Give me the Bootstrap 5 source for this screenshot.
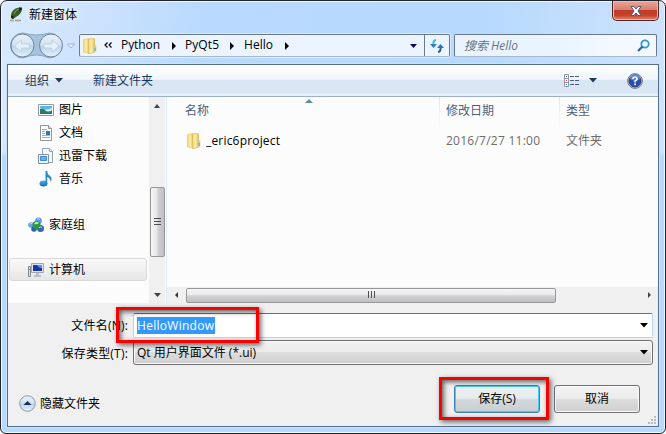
<!DOCTYPE html>
<html lang="zh-CN">
<head>
<meta charset="utf-8">
<title>新建窗体</title>
<link href="https://cdn.jsdelivr.net/npm/bootstrap@5.3.0/dist/css/bootstrap.min.css" rel="stylesheet">
<style>
html,body{height:100%;margin:0;overflow:hidden}
body{font-family:"Open Sans","Noto Sans CJK SC",sans-serif;font-size:12px;line-height:16px;color:#000;background:#f4f6f8}
svg{display:block;flex:none}
.window{width:666px;height:434px;border:1px solid #20242c;border-radius:7px 7px 6px 6px;box-shadow:inset 0 0 0 1px #f0f8ff;padding:0 6px 0 6px;
 background:linear-gradient(180deg,transparent 150px,#b6d9fd 156px),linear-gradient(100deg,#d9eafd 0,#cde3fd 12%,#b9dafd 28%,#b6d9fd 65%,#cbe2fc 88%,#d5e7fc 100%)}
.titlebar{height:33px;padding-left:3px}
.titletext{text-shadow:0 0 5px #fff,0 0 8px #fff;margin:6px 0 0 5px}
.closebtn{width:47px;height:20px;border:1px solid #58232b;border-top:0;border-radius:0 0 5px 5px;box-shadow:inset 0 0 0 1px #f0b8ae;background:linear-gradient(#e6a79b 0,#d8806f 45%,#c03e29 50%,#c5402a 75%,#e48a6c 100%)}
.addressrow{height:23px;padding:0 2px 0 3px}
.crumbs{width:371px;height:23px;margin-left:3px;border:1px solid #68798c;border-bottom-color:#a5b9cf;border-radius:2px;background:#ecf5ff;box-shadow:0 0 0 1px #d9ebfe}
.refresh{width:25px;height:21px;border-left:1px solid #68798c}
.search{width:203px;height:23px;border:1px solid #68798c;border-bottom-color:#a5b9cf;border-radius:2px;background:linear-gradient(100deg,#e9f4ff 50%,#f4f9ff 80%);color:#68737f;font-style:italic;padding:0 6px 0 9px}
.client{height:363px;margin-top:7px;border:1px solid #536f8d;background:#f0f0f0;box-shadow:0 0 0 1px #cbe3fa}
.toolbar{height:32px;background:linear-gradient(#fdfeff 0,#f1f6fd 46%,#dbe6f4 50%,#dbe6f4 90%,#e8f0fa 94%);border-bottom:1px solid #9bafc9;color:#1e395b;padding:0 15px 0 17px}
.panes{height:206px;background:#fcfcfc}
.sidebar{width:141px;padding-top:1px}
.item{height:23px;padding-left:30px}
.item svg{margin-right:5px}
.rootitem{height:23px;margin:0 2px 0 1px;padding-left:18px;border:1px solid transparent}
.rootitem svg{margin-right:5px}
.chosen{border-color:#d9d9d9;border-radius:3px;background:linear-gradient(#f9f9f9,#e6e6e6)}
.vscroll{width:16px;background:#f0f0f0}
.vthumb{width:15px;height:70px;border:1px solid #979797;border-radius:2px;background:linear-gradient(90deg,#f5f5f5 0,#e9e9eb 45%,#d2d2d5 52%,#bfbfc3 100%)}
.filepane{border-left:1px solid #dcebfa;margin-left:1px}
.heads{height:32px;color:#4c607a}
.headcell{background:linear-gradient(#d9e7f6,#fcfcfc) left/1px 100% no-repeat;padding:6px 0 0 7px}
.hscroll{height:16px;background:#f0f0f0;padding:0 5px 0 7px}
.hthumb{width:370px;height:15px;border:1px solid #979797;border-radius:2px;background:linear-gradient(#f5f5f5 0,#e9e9eb 45%,#d2d2d5 52%,#bfbfc3 100%)}
.fieldlabel{width:125px;text-align:right;padding-right:5px;white-space:nowrap;letter-spacing:.2px}
.namefield{width:520px;height:25px;border:1px solid #b7d5ea;border-top-color:#3d7bad;border-radius:2px;background:#fff;padding:0 4px 0 3px}
.typefield{width:520px;height:25px;margin-top:2px;border:1px solid #707070;border-radius:3px;box-shadow:inset 0 0 0 1px #f8f8f8;background:linear-gradient(#f2f2f2 0,#ebebeb 48%,#dddddd 50%,#cfcfcf 100%);padding:0 4px 0 3px}
.picked{background:#3399ff;color:#fff;height:17px;line-height:16px}
.actions{margin-top:20px;height:28px;padding:0 18px 0 11px}
.winbtn{width:86px;height:28px;padding:0;font-size:12px;line-height:16px;color:#000;border:1px solid #707070;border-radius:3px;box-shadow:inset 0 0 0 1px #fbfbfb;background:linear-gradient(#f2f2f2 0,#ebebeb 48%,#dddddd 50%,#cfcfcf 100%)}
.mainbtn{border-color:#3c7fb1;box-shadow:inset 0 0 0 1px #42cdf5;background:linear-gradient(#eef2f3 0,#e5eaec 48%,#d3d9dc 50%,#c7cfd3 100%)}
.callout{border:3px solid #f90000;box-shadow:2px 2px 5px #0009,inset 2px 2px 5px #0009;pointer-events:none}
.callname{left:115px;top:306px;width:143px;height:36px}
.callsave{left:438px;top:376px;width:110px;height:43px}
.grip{right:8px;bottom:8px}
</style>
<script src="https://cdn.jsdelivr.net/npm/bootstrap@5.3.0/dist/js/bootstrap.bundle.min.js"></script>
</head>
<body>
<svg width="0" height="0" class="position-absolute">
<defs>
<linearGradient id="gold" x2="1"><stop stop-color="#f1d56c"/><stop offset=".5" stop-color="#fbeeb0"/><stop offset="1" stop-color="#e3bd49"/></linearGradient>
<linearGradient id="orb" x2="0" y2="1"><stop stop-color="#e7f1fb"/><stop offset=".48" stop-color="#d3e3f2"/><stop offset=".52" stop-color="#bdd3e7"/><stop offset="1" stop-color="#e2f1fd"/></linearGradient>
<linearGradient id="blue" x2="0" y2="1"><stop stop-color="#52b7e8"/><stop offset="1" stop-color="#1b62b5"/></linearGradient>
<symbol id="folder" viewBox="0 0 14 16"><path d="M.5 1.500 6 .5V15L.5 14z" fill="url(#gold)" stroke="#e3c970" stroke-width=".7"/><path d="M5.500 1.500 7 .7h4.500V14L7 15.500H5.500z" fill="url(#gold)" stroke="#dcba5a" stroke-width=".7"/><path d="M10.500 7.500h2.500v6l-2.500 1z" fill="#f1d980" stroke="#dcbc62" stroke-width=".5"/><path d="M12 9.500v3.500" stroke="#4aa8e8" stroke-width="1.200"/></symbol>
</defs>
</svg>
<div class="window position-relative">
  <div class="titlebar d-flex align-items-start">
    <svg width="14" height="16" viewBox="0 0 14 16" style="margin-top:6px"><path d="M1 9Q1 2 9 .5l3 1Q12 7 6 10l-3 2z" fill="#375c28"/><path d="M4 7Q5 3 9 2" stroke="#89a45e" fill="none"/><path d="M9 .5h3v2L9 4z" fill="#172819"/><path d="M1 8l3 2-1 2-2-1z" fill="#19241b"/><path d="M0 13.500h2m1-1v2m2-1h2m1-1v2m1-1h2" stroke="#a89c78" stroke-width="1.500"/></svg>
    <span class="titletext">新建窗体</span>
    <div class="closebtn ms-auto d-flex align-items-center justify-content-center"><svg width="14" height="12" viewBox="0 0 14 12"><path d="M2 1.500h3L7 4l2-2.500h3L9 6l3 4.500H9L7 8l-2 2.500H2L5 6z" fill="#fff" stroke="#54596a"/></svg></div>
  </div>
  <div class="addressrow d-flex align-items-center">
    <svg width="66" height="27" viewBox="0 0 66 27"><path d="M13 1Q27 5 39 1a12.500 12.500 0 0 1 0 25Q27 20 13 26A12.500 12.500 0 0 1 13 1z" fill="#a6c2df" stroke="#89a6c3"/><circle cx="12.500" cy="13.500" r="11.500" fill="url(#orb)" stroke="#6e8297"/><circle cx="41" cy="13.500" r="11.500" fill="url(#orb)" stroke="#6e8297"/><path d="m4.500 14 7-6v4h8v4h-8v4zM49 14l-7-6v4h-8v4h8v4z" fill="#e6f0fa" stroke="#b5cade" stroke-width=".7"/><path d="M57.500 12h7l-3.500 4z" fill="#e9f4ff" stroke="#8fabc7" stroke-width=".8"/></svg>
    <div class="crumbs d-flex align-items-center">
      <svg width="14" height="16" style="margin-left:3px"><use href="#folder"/></svg>
      <svg width="8" height="7" viewBox="0 0 8 7" style="margin-left:7px"><path d="M3.500.5 1 3l2.500 2.500M7.500.5 5 3l2.500 2.500" fill="none" stroke="#000" stroke-width="1.200"/></svg>
      <svg width="306" height="21"><g fill="#000" font-size="12"><text x="9" y="14" textLength="39">Python</text><path d="m60 7 4 4-4 4z"/><text x="73" y="14" textLength="34">PyQt5</text><path d="m118 7 4 4-4 4z"/><text x="132" y="14" textLength="29">Hello</text><path d="m173 7 4 4-4 4z"/></g><path d="M298 9h7l-3.500 4z" fill="#04046c"/></svg>
      <div class="refresh ms-auto d-flex align-items-center justify-content-center"><svg width="14" height="14" viewBox="0 0 14 14"><path d="M6 1Q3 1 3.500 6" fill="none" stroke="#46b1e1" stroke-width="2"/><path d="M0 5h7L3.500 9z" fill="#2c7fca"/><path d="M8 13q3 0 2.500-5" fill="none" stroke="#24589f" stroke-width="2"/><path d="M7 9h7l-3.500-4z" fill="#2c72c0"/></svg></div>
    </div>
    <div class="search ms-auto d-flex align-items-center justify-content-between"><span>搜索 Hello</span><svg width="13" height="13" viewBox="0 0 13 13"><circle cx="8" cy="5" r="3.700" fill="#e8f8ff" stroke="#3a95d5" stroke-width="1.800"/><path d="M5.500 7.500 1 12" stroke="#265eae" stroke-width="2.200"/></svg></div>
  </div>
  <div class="client">
    <div class="toolbar d-flex align-items-center">
      <span>组织</span><svg width="8" height="5" style="margin-left:6px"><path d="M0 0h8L4 4.500z" fill="#1e395b"/></svg>
      <span style="margin-left:30px">新建文件夹</span>
      <svg width="16" height="13" viewBox="0 0 16 13" class="ms-auto"><path d="M.5.500h4v12h-4zM.5 4.500h4m-4 4h4" fill="#fff" stroke="#8b97a5"/><path d="M2 2h1v1H2zM2 10h1v1H2z" fill="#3d658f"/><path d="M2 6h1v1H2z" fill="#d33"/><path d="M6 2.500h10M6 6.500h10M6 10.500h10" stroke="#4b6078" stroke-dasharray="4 1"/></svg>
      <svg width="8" height="5" style="margin-left:9px"><path d="M0 0h8L4 4.500z" fill="#1e395b"/></svg>
      <svg width="16" height="16" viewBox="0 0 16 16" style="margin-left:30px"><circle cx="8" cy="8" r="7.400" fill="#ddd" stroke="#77767b"/><circle cx="8" cy="8" r="6" fill="#2450b4" stroke="#23357f"/><path d="M3 6a5 5 0 0 1 10 0Q8 9 3 6z" fill="#5c85d6"/><path d="M5.800 6Q6 4 8 4t2.200 1.800Q10.200 7 8 8v1.500" fill="none" stroke="#fff" stroke-width="1.600"/><path d="M7.200 10.500h1.700v1.700H7.200z" fill="#fff"/></svg>
    </div>
    <div class="panes d-flex">
      <div class="sidebar">
        <div class="item d-flex align-items-center"><svg width="16" height="16" viewBox="0 0 16 16"><path d="M.5 2.500h15v11H.5z" fill="#fff" stroke="#8f9aa2"/><path d="M2 4h12v8H2z" fill="#55b9e7"/><path d="M2 6q5 3 12 0v3H2z" fill="#d8f1e8"/><path d="M2 7q4-1 6 2t6-1v4H2z" fill="#287d67"/><path d="M2 11h12v1H2z" fill="#1971a7"/></svg>图片</div>
        <div class="item d-flex align-items-center"><svg width="16" height="16" viewBox="0 0 16 16"><path d="M2.500.5h8l3 3v12h-11z" fill="#fff" stroke="#8c979f"/><path d="M10.500.5v3h3" fill="#ddd" stroke="#8c979f"/><path d="M4 4.500h5M4 6.500h3M4 8.500h3M4 10.500h8M4 12.500h8" stroke="#9fafc2"/><path d="M8 6h4v4H8z" fill="#3474bb"/></svg>文档</div>
        <div class="item d-flex align-items-center"><svg width="16" height="16" viewBox="0 0 16 16"><path d="M4.500.5h7l3 3v11h-10z" fill="#f2f8fd" stroke="#92a2af"/><path d="M11.500.5v3h3" fill="#dfeaf2" stroke="#92a2af"/><path d="M.5 6.500h10v9H.5z" fill="#e9f4fc" stroke="#8094a5"/><path d="M2.500 8.500h6v4h-6z" fill="#67b2ef" stroke="#3e86ce"/></svg>迅雷下载</div>
        <div class="item d-flex align-items-center"><svg width="16" height="16" viewBox="0 0 16 16"><ellipse cx="5.500" cy="12.500" rx="4" ry="3" fill="url(#blue)"/><path d="M7.500 0h1.700Q9 3 12 5t.5 6q0-4-3.300-5v7H7.500z" fill="#278bd0"/></svg>音乐</div>
        <div class="rootitem d-flex align-items-center" style="margin-top:23px"><svg width="16" height="16" viewBox="0 0 16 16"><circle cx="3" cy="8" r="2.800" fill="#66a2e5"/><circle cx="10.500" cy="3.800" r="3.300" fill="#5b9ade"/><circle cx="12.500" cy="11.500" r="3.500" fill="#3565bd"/><circle cx="6" cy="12" r="2.800" fill="#315fb4"/><circle cx="8.500" cy="8" r="4" fill="#299a3f"/><path d="M6 7q2-4 5-1-2 2-5 1z" fill="#b8ec9e"/><path d="M9 2q2-1 3 1M1.500 7q1-1.500 2.500-.5M11 11q1-2 3-.5" fill="none" stroke="#c9e0fa"/></svg>家庭组</div>
        <div class="rootitem chosen d-flex align-items-center" style="margin-top:22px"><svg width="16" height="16" viewBox="0 0 16 16"><path d="M.5 4.500h2v10h-2z" fill="#d7dde0" stroke="#848b90"/><path d="M1 7h1v1H1z" fill="#4cb748"/><path d="M3.500 1.500h12v9h-12z" fill="#e2e5e7" stroke="#a2a8ad"/><path d="M5 3h9v6H5z" fill="#1535ae"/><path d="M9 3h5v3q-4 0-5-3z" fill="#5b94ea"/><path d="M8 11h3v2h2v2H6v-2h2z" fill="#babfc3"/></svg>计算机</div>
      </div>
      <div class="vscroll d-flex flex-column align-items-center justify-content-between">
        <svg width="8" height="5" style="margin-top:6px"><path d="M1 5h6L4 1z" fill="#444"/></svg>
        <div class="vthumb d-flex align-items-center justify-content-center" style="margin-top:42px"><svg width="8" height="9"><path d="M1 1.500h7m-7 3h7m-7 3h7" stroke="#4e4e52"/></svg></div>
        <svg width="7" height="5" style="margin-bottom:5px"><path d="M0 0h7L3.500 4z" fill="#444"/></svg>
      </div>
      <div class="filepane flex-grow-1 d-flex flex-column">
        <div class="heads d-flex">
          <div class="d-flex" style="width:272px;padding:6px 0 0 18px">名称<svg width="8" height="5" style="margin:-5px 0 0 96px"><path d="M0 5h8L4 1z" fill="#5b8ead"/></svg></div>
          <div class="headcell" style="width:120px">修改日期</div>
          <div class="headcell flex-grow-1">类型</div>
        </div>
        <div class="d-flex align-items-center" style="height:23px">
          <svg width="14" height="16" style="margin:0 5px 0 20px"><use href="#folder"/></svg>
          <svg width="240" height="20"><text x="0" y="14" font-size="12" textLength="74">_eric6project</text></svg>
          <svg width="120" height="20"><text x="0" y="14" font-size="12" fill="#6d6d6d" textLength="94">2016/7/27 11:00</text></svg>
          <span style="color:#6d6d6d">文件夹</span>
        </div>
        <div class="hscroll d-flex align-items-center mt-auto">
          <svg width="5" height="8"><path d="M4 1v6L1 4z" fill="#333"/></svg>
          <div class="hthumb d-flex align-items-center justify-content-center" style="margin-left:7px"><svg width="9" height="8"><path d="M1.500 0v7m3-7v7m3-7v7" stroke="#4e4e52"/></svg></div>
          <svg width="5" height="8" class="ms-auto"><path d="M0 1v6l3-3z" fill="#444"/></svg>
        </div>
      </div>
    </div>
    <div class="d-flex align-items-center" style="padding-top:10px">
      <label class="fieldlabel">文件名(N):</label>
      <div class="namefield d-flex align-items-center justify-content-between"><span class="picked"><svg width="78" height="17"><text x="0" y="13" font-size="12" fill="#fff" textLength="77">HelloWindow</text></svg></span><svg width="8" height="5"><path d="M0 0h8L4 4.500z"/></svg></div>
    </div>
    <div class="d-flex align-items-center">
      <label class="fieldlabel pt-1">保存类型(T):</label>
      <div class="typefield d-flex align-items-center justify-content-between"><span>Qt 用户界面文件 (*.ui)</span><svg width="8" height="5"><path d="M0 0h8L4 4.500z"/></svg></div>
    </div>
    <div class="actions d-flex align-items-center">
      <svg width="17" height="17" viewBox="0 0 17 17" class="mt-2"><circle cx="8.500" cy="8.500" r="7.800" fill="url(#orb)" stroke="#8d98a5"/><path d="m4.500 10 4-4 4 4z" fill="#1d2c54"/></svg>
      <span class="ms-1" style="margin-top:10px">隐藏文件夹</span>
      <button class="btn winbtn mainbtn ms-auto">保存(S)</button>
      <button class="btn winbtn" style="margin-left:14px">取消</button>
    </div>
  </div>
  <div class="callout callname position-absolute"></div>
  <div class="callout callsave position-absolute"></div>
  <svg class="grip position-absolute" width="9" height="9"><path d="M6 0h2v2H6zM3 3h2v2H3zm3 0h2v2H6zM0 6h2v2H0zm3 0h2v2H3zm3 0h2v2H6z" fill="#bbb"/></svg>
</div>
</body>
</html>
